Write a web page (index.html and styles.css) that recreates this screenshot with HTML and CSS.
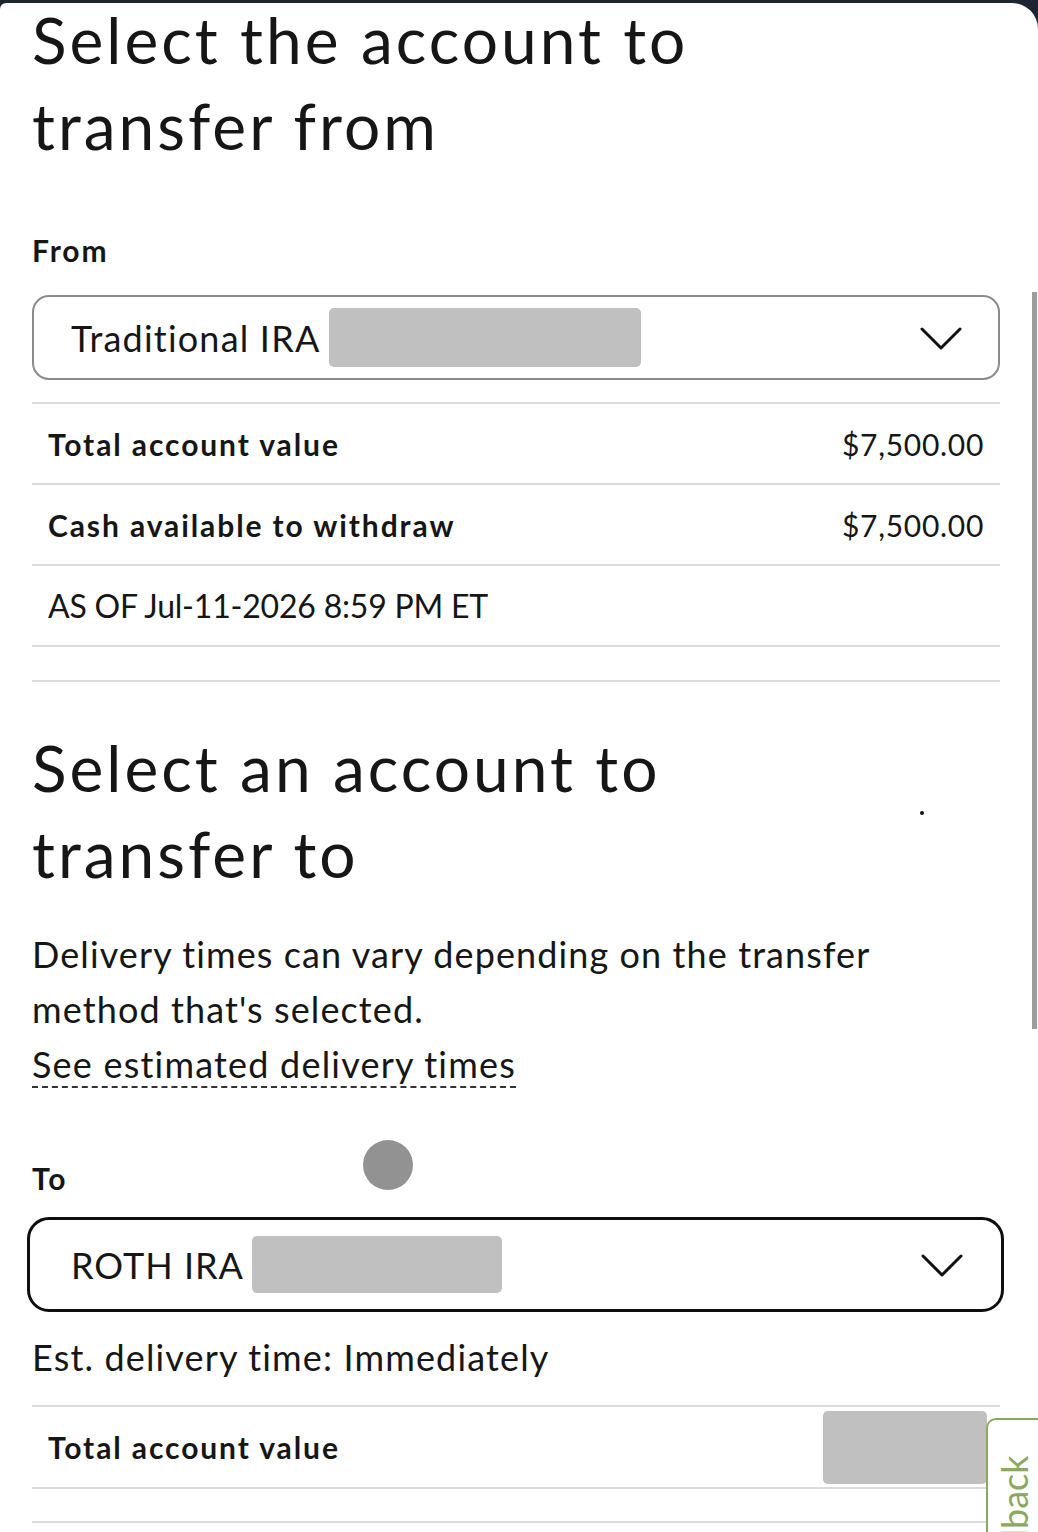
FILE: index.html
```html
<!DOCTYPE html>
<html>
<head>
<meta charset="utf-8">
<link rel="stylesheet" href="styles.css">
</head>
<body>
<div class="frame">
  <div class="card">
    <h1 class="title title-1"><span class="title-line">Select the account to</span><span class="title-line title-line-2">transfer from</span></h1>

    <div class="field-label">From</div>
    <div class="select select-from">
      <span class="select-text">Traditional IRA</span>
      <span class="mask mask-from"></span>
      <svg class="chev" viewBox="0 0 42 24" width="42" height="24"><path d="M2 2 L21 21 L40 2" fill="none" stroke="#111" stroke-width="3" stroke-linecap="round" stroke-linejoin="round"/></svg>
    </div>

    <div class="rows">
      <div class="row"><span class="row-label">Total account value</span><span class="row-value">$7,500.00</span></div>
      <div class="row"><span class="row-label">Cash available to withdraw</span><span class="row-value">$7,500.00</span></div>
      <div class="row"><span class="asof">AS OF Jul-11-2026 8:59 PM ET</span></div>
      <div class="row row-empty"></div>
    </div>

    <h2 class="title title-2">Select an account to<br>transfer to</h2>

    <p class="body">Delivery times can vary depending on the transfer<br>method that's selected.</p>
    <a class="link">See estimated delivery times</a>

    <div class="field-label field-to">To</div>
    <div class="select select-to">
      <span class="select-text">ROTH IRA</span>
      <span class="mask mask-to"></span>
      <svg class="chev" viewBox="0 0 42 24" width="42" height="24"><path d="M2 2 L21 21 L40 2" fill="none" stroke="#111" stroke-width="3" stroke-linecap="round" stroke-linejoin="round"/></svg>
    </div>

    <div class="est">Est. delivery time: Immediately</div>

    <div class="rows rows-2">
      <div class="row"><span class="row-label">Total account value</span><span class="mask mask-value"></span></div>
      <div class="row row-empty2"></div>
    </div>

    <span class="touch"></span>
    <span class="dot"></span>
    <span class="scrollbar"></span>
    <div class="feedback"><span class="feedback-text">Feedback</span></div>
  </div>
</div>
</body>
</html>
```

FILE: styles.css
```css
html, body {
  margin: 0;
  padding: 0;
  background: #1d2533;
}
body {
  width: 1038px;
  height: 1532px;
  overflow: hidden;
  font-family: "Lato", "Open Sans", sans-serif;
  color: #161616;
}
.frame {
  padding-top: 3px;
  height: 1529px;
}
.card {
  position: relative;
  background: #fff;
  height: 100%;
  border-top-right-radius: 26px;
  border-top-left-radius: 6px;
  padding: 0 38px 0 32px;
}
.title {
  margin: 0;
  font-weight: 400;
  font-size: 64px;
  line-height: 86px;
  letter-spacing: 3px;
}
.title-1 {
  padding-top: 2px;
}
.title-line {
  display: block;
  line-height: 70px;
}
.title-line-2 {
  margin-top: 16px;
}
.title-2 {
  margin-top: 43px;
}
.field-label {
  font-weight: 700;
  font-size: 30px;
  line-height: 34px;
  letter-spacing: 1.9px;
  margin-top: 72px;
}
.field-to {
  margin-top: 73px;
}
.select {
  position: relative;
  display: flex;
  align-items: center;
  box-sizing: border-box;
  background: #fff;
}
.select-from {
  margin-top: 28px;
  height: 85px;
  border: 2px solid #8b8b8b;
  border-radius: 17px;
  padding-left: 37px;
}
.select-to {
  margin-top: 22px;
  margin-left: -5px;
  margin-right: -4px;
  height: 95px;
  border: 3.5px solid #0f0f0f;
  border-radius: 22px;
  padding-left: 41px;
}
.select-text {
  font-size: 36px;
  line-height: 40px;
  letter-spacing: 1px;
}
.select-from .select-text {
  letter-spacing: 1.2px;
}
.mask {
  display: inline-block;
  background: #c0c0c0;
  border-radius: 5px;
}
.mask-from {
  width: 312px;
  height: 59px;
  margin-left: 9px;
}
.mask-to {
  width: 250px;
  height: 57px;
  margin-left: 8px;
}
.chev {
  position: absolute;
  right: 36px;
  top: 50%;
  margin-top: -11px;
}
.select-to .chev {
  right: 38px;
}
.rows {
  margin-top: 22px;
  border-top: 2px solid #dcdcdc;
}
.row {
  display: flex;
  justify-content: space-between;
  align-items: center;
  height: 79px;
  border-bottom: 2px solid #dcdcdc;
  padding: 0 16px;
}
.row-empty {
  height: 33px;
}
.row-label {
  font-weight: 700;
  font-size: 30px;
  letter-spacing: 1.9px;
}
.row-value {
  font-size: 30px;
  letter-spacing: 0.7px;
}
.asof {
  font-size: 32px;
  letter-spacing: -0.2px;
}
.body {
  margin: 30px 0 0;
  font-size: 36px;
  line-height: 55px;
  letter-spacing: 1.1px;
}
.link {
  display: inline-block;
  font-size: 36px;
  line-height: 42px;
  letter-spacing: 1.2px;
  margin-top: 6px;
  padding-bottom: 1px;
  border-bottom: 2px dashed #333;
}
.est {
  font-size: 36px;
  line-height: 40px;
  letter-spacing: 1.15px;
  margin-top: 25px;
}
.rows-2 {
  margin-top: 28px;
}
.rows-2 .row {
  height: 80px;
}
.row-empty2 {
  height: 32px !important;
}
.mask-value {
  width: 164px;
  height: 73px;
  margin-right: -3px;
}
.touch {
  position: absolute;
  left: 363px;
  top: 1137px;
  width: 50px;
  height: 50px;
  border-radius: 50%;
  background: #929292;
}
.dot {
  position: absolute;
  left: 920px;
  top: 808px;
  width: 4px;
  height: 4px;
  border-radius: 50%;
  background: #111;
}
.scrollbar {
  position: absolute;
  left: 1032px;
  top: 289px;
  width: 5px;
  height: 737px;
  background: #9c9c9c;
}
.feedback {
  position: absolute;
  left: 986px;
  top: 1415px;
  width: 52px;
  height: 140px;
  box-sizing: border-box;
  border: 2px solid #8aa862;
  border-right: none;
  border-top-left-radius: 10px;
  background: #fff;
  overflow: hidden;
}
.feedback-text {
  position: absolute;
  left: 0;
  top: 0;
  transform-origin: 0 0;
  transform: translate(9px, 186px) rotate(-90deg);
  font-size: 36px;
  color: #8aa862;
  white-space: nowrap;
  line-height: 34px;
}
```
